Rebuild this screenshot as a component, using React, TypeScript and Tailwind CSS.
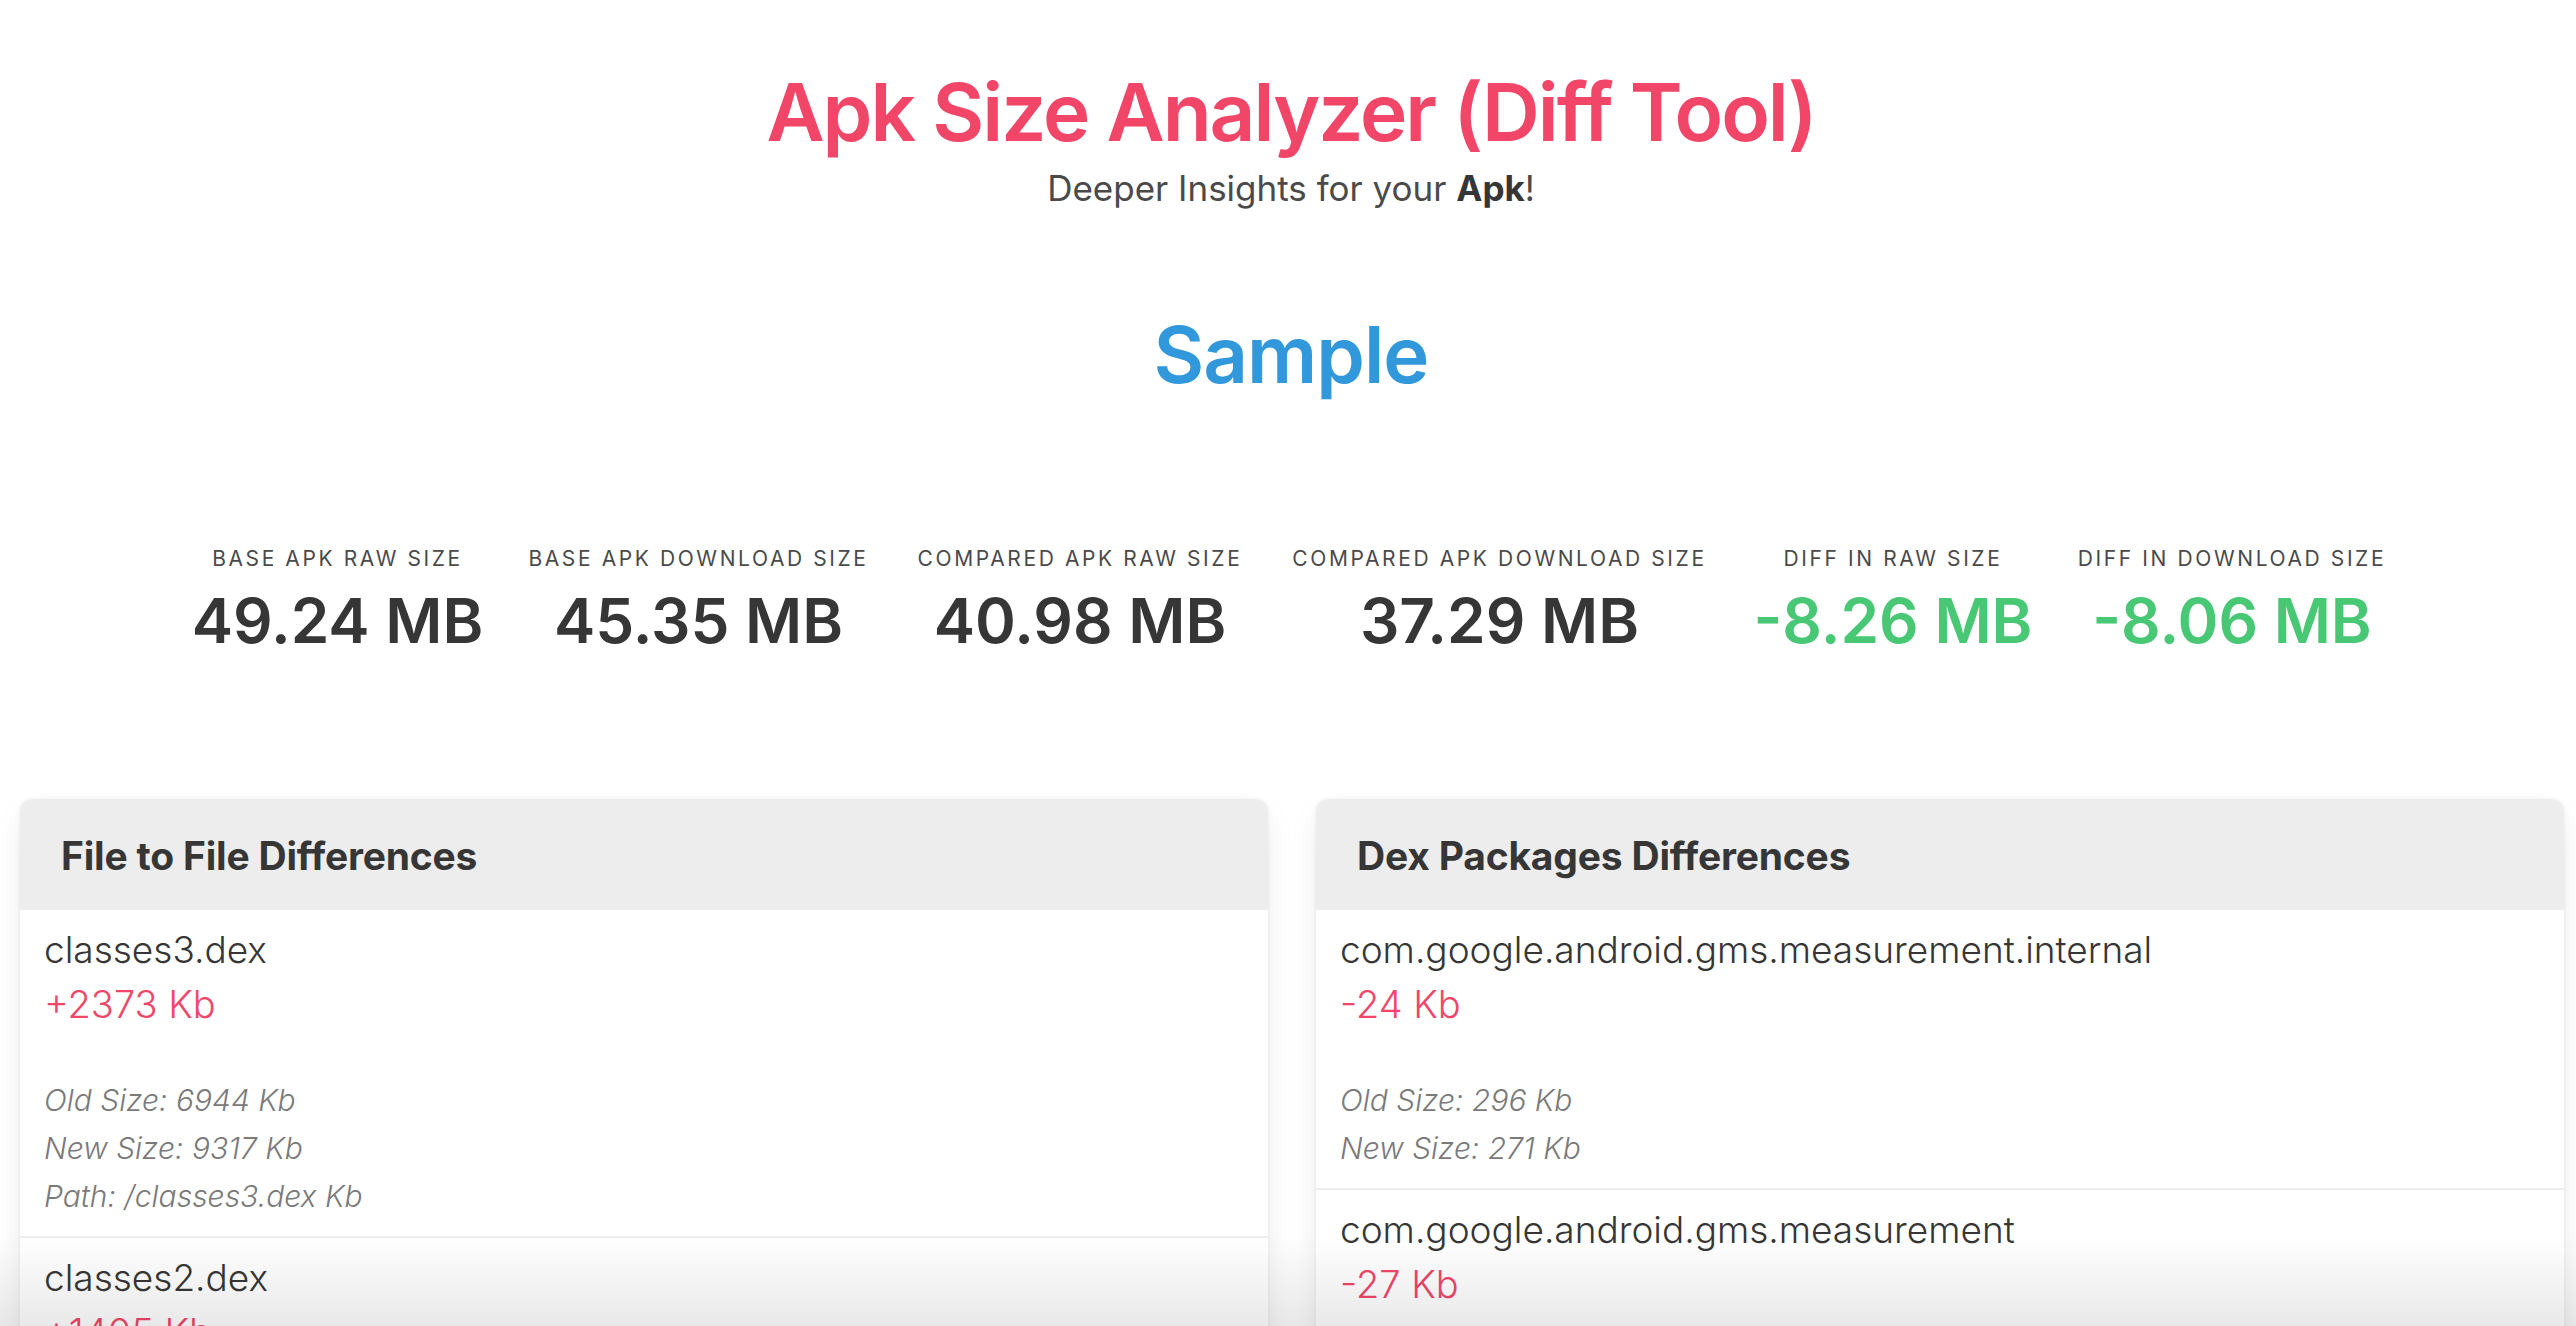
import React from "react";

const stats = [
  { label: "Base APK raw size", value: "49.24 MB", w: "w-[333px]", good: false },
  { label: "Base APK download size", value: "45.35 MB", w: "w-[389px]", good: false },
  { label: "Compared APK raw size", value: "40.98 MB", w: "w-[374px]", good: false },
  { label: "Compared APK download size", value: "37.29 MB", w: "w-[465px]", good: false },
  { label: "Diff in raw size", value: "-8.26 MB", w: "w-[322px]", good: true },
  { label: "Diff in download size", value: "-8.06 MB", w: "w-[356px]", good: true },
];

type Row = { name: string; diff: string; oldSize: string; newSize: string; path?: string };

const fileRows: Row[] = [
  { name: "classes3.dex", diff: "+2373 Kb", oldSize: "6944 Kb", newSize: "9317 Kb", path: "/classes3.dex Kb" },
  { name: "classes2.dex", diff: "+1405 Kb", oldSize: "7969 Kb", newSize: "9374 Kb", path: "/classes2.dex Kb" },
  { name: "classes.dex", diff: "-1021 Kb", oldSize: "9126 Kb", newSize: "8105 Kb", path: "/classes.dex Kb" },
];

const dexRows: Row[] = [
  { name: "com.google.android.gms.measurement.internal", diff: "-24 Kb", oldSize: "296 Kb", newSize: "271 Kb" },
  { name: "com.google.android.gms.measurement", diff: "-27 Kb", oldSize: "112 Kb", newSize: "85 Kb" },
  { name: "com.google.android.gms.internal", diff: "-31 Kb", oldSize: "402 Kb", newSize: "371 Kb" },
];

function Panel({ title, rows }: { title: string; rows: Row[] }) {
  return (
    <div className="flex-1 rounded-xl bg-white shadow-[0_16px_32px_-4px_rgba(10,10,10,0.1),0_0_0_2px_rgba(10,10,10,0.02)]">
      <div className="rounded-t-xl bg-[#ededed] px-[41px] pt-[32px] pb-[29px] text-[39px] leading-[50px] font-bold tracking-[-0.2px] text-[#363636]">
        {title}
      </div>
      {rows.map((row) => (
        <div key={row.name} className="border-b-2 border-[#ededed] px-[24px] py-[16px]">
          <div className="text-[37px] leading-[48px] font-light text-[#363636]">{row.name}</div>
          <div className="text-[38px] leading-[60px] font-light text-[#f14668]">{row.diff}</div>
          <div className="mt-[42px] text-[30px] leading-[48px] font-light italic text-[#7a7a7a]">
            <div>Old Size: {row.oldSize}</div>
            <div>New Size: {row.newSize}</div>
            {row.path && <div>Path: {row.path}</div>}
          </div>
        </div>
      ))}
    </div>
  );
}

export default function App() {
  return (
    <div className="relative min-h-screen bg-white font-['Inter',sans-serif]">
      <header className="pt-[72px] pl-[6px] text-center">
        <h1 className="text-[80px] leading-[80px] font-semibold tracking-[-2px] text-[#f14668]">
          Apk Size Analyzer (Diff Tool)
        </h1>
        <p className="mt-[16px] text-[35px] leading-[40px] text-[#4a4a4a]">
          Deeper Insights for your <strong className="font-bold text-[#363636]">Apk</strong>!
        </p>
        <h2 className="mt-[108px] text-[78px] leading-[78px] font-semibold tracking-[-1px] text-[#3298dc]">
          Sample
        </h2>
      </header>

      <div className="mt-[150px] ml-[171px] flex">
        {stats.map((s) => (
          <div key={s.label} className={`${s.w} flex flex-col items-center text-center`}>
            <div className="text-[21px] leading-[30px] tracking-[2.6px] uppercase text-[#4a4a4a]">{s.label}</div>
            <div
              className={`mt-[16px] text-[62px] leading-[62px] font-semibold ${s.good ? "text-[#48c774]" : "text-[#363636]"}`}
            >
              {s.value}
            </div>
          </div>
        ))}
      </div>

      <div className="mt-[147px] flex items-start gap-[48px] pl-[20px] pr-[12px] pb-[60px]">
        <Panel title="File to File Differences" rows={fileRows} />
        <Panel title="Dex Packages Differences" rows={dexRows} />
      </div>

      <div className="pointer-events-none fixed inset-x-0 bottom-0 h-[90px] bg-gradient-to-b from-white/0 to-[#e9e9e9] mix-blend-multiply" />
    </div>
  );
}
